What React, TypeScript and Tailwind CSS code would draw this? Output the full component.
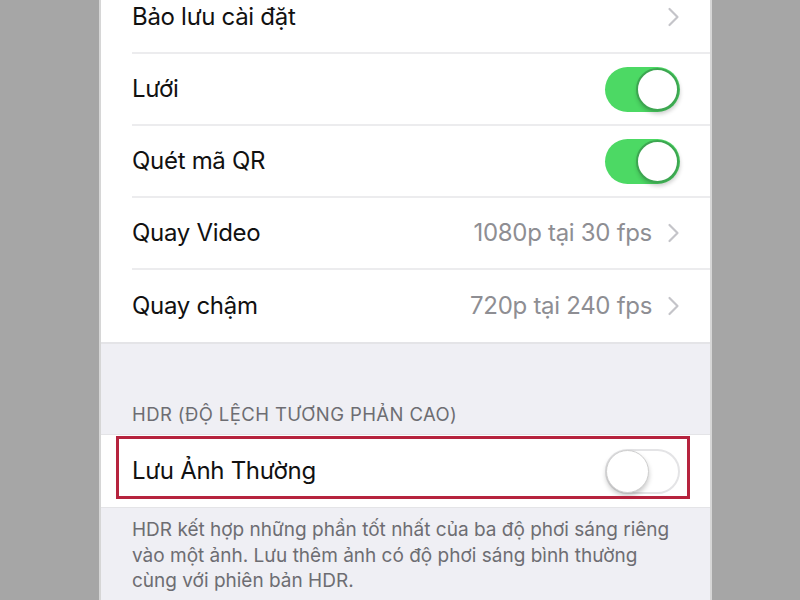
import React from "react";

const font = { fontFamily: "Inter, 'Noto Sans', sans-serif" };

function Chevron() {
  return (
    <svg width="13" height="20" viewBox="0 0 13 20" fill="none" className="shrink-0">
      <path d="M2.5 2 L10.5 10 L2.5 18" stroke="#c4c4c9" strokeWidth="2.2" strokeLinecap="round" strokeLinejoin="round" />
    </svg>
  );
}

function Toggle({ on }: { on: boolean }) {
  if (on) {
    return (
      <div className="w-[75px] h-[45px] rounded-full bg-[#4cd964] relative shrink-0">
        <div className="absolute right-[1px] top-[1px] w-[43px] h-[43px] rounded-full bg-white border-2 border-[#3da651] shadow-[1px_3px_4px_rgba(0,0,0,0.2)]" />
      </div>
    );
  }
  return (
    <div className="w-[75px] h-[45px] rounded-full bg-white border-2 border-[#e4e4e6] relative shrink-0">
      <div className="absolute left-[-1px] top-[-1px] w-[43px] h-[43px] rounded-full bg-white border border-[#cfcfcf] shadow-[0_3px_5px_rgba(0,0,0,0.22)]" />
    </div>
  );
}

function Row({ label, value, toggle, chevron, last }: { label: string; value?: string; toggle?: boolean; chevron?: boolean; last?: boolean }) {
  return (
    <div className="h-[72px] pl-[31px] flex">
      <div className={`flex-1 flex items-center justify-between pr-[30px] ${last ? "" : "border-b-2 border-[#ececee]"}`}>
        <span className="text-[24px] tracking-[-0.3px] text-[#111]">{label}</span>
        <div className="flex items-center gap-[15px]">
          {value && <span className="text-[24px] tracking-[-0.3px] text-[#8e8e93]">{value}</span>}
          {chevron && <Chevron />}
          {toggle !== undefined && <Toggle on={toggle} />}
        </div>
      </div>
    </div>
  );
}

export default function App() {
  return (
    <div className="w-[800px] h-[600px] bg-[#a6a6a6] pl-[99px] overflow-hidden" style={font}>
      <div className="w-[613px] h-[600px] bg-[#efeff4] border-x-2 border-[#d6d6d6] overflow-hidden">
        <div className="-mt-[18px] bg-white border-b-2 border-[#e4e4e7]">
          <Row label="Bảo lưu cài đặt" chevron />
          <Row label="Lưới" toggle={true} />
          <Row label="Quét mã QR" toggle={true} />
          <Row label="Quay Video" value="1080p tại 30 fps" chevron />
          <Row label="Quay chậm" value="720p tại 240 fps" chevron last />
        </div>
        <div className="h-[90px] flex items-end pl-[31px] pb-[5px]">
          <span className="text-[18.5px] text-[#6d6d72] tracking-[0.4px]">HDR (ĐỘ LỆCH TƯƠNG PHẢN CAO)</span>
        </div>
        <div className="relative bg-white border-y border-[#e4e4e7]">
          <Row label="Lưu Ảnh Thường" toggle={false} last />
          <div className="absolute left-[15px] right-[20px] top-[1px] bottom-[8px] border-[3px] border-[#b6233e] pointer-events-none" />
        </div>
        <div className="pl-[31px] pr-[36px] pt-[9px] text-[19px] leading-[25.5px] text-[#6d6d72]">
          HDR kết hợp những phần tốt nhất của ba độ phơi sáng riêng vào một ảnh. Lưu thêm ảnh có độ phơi sáng bình thường cùng với phiên bản HDR.
        </div>
      </div>
    </div>
  );
}
